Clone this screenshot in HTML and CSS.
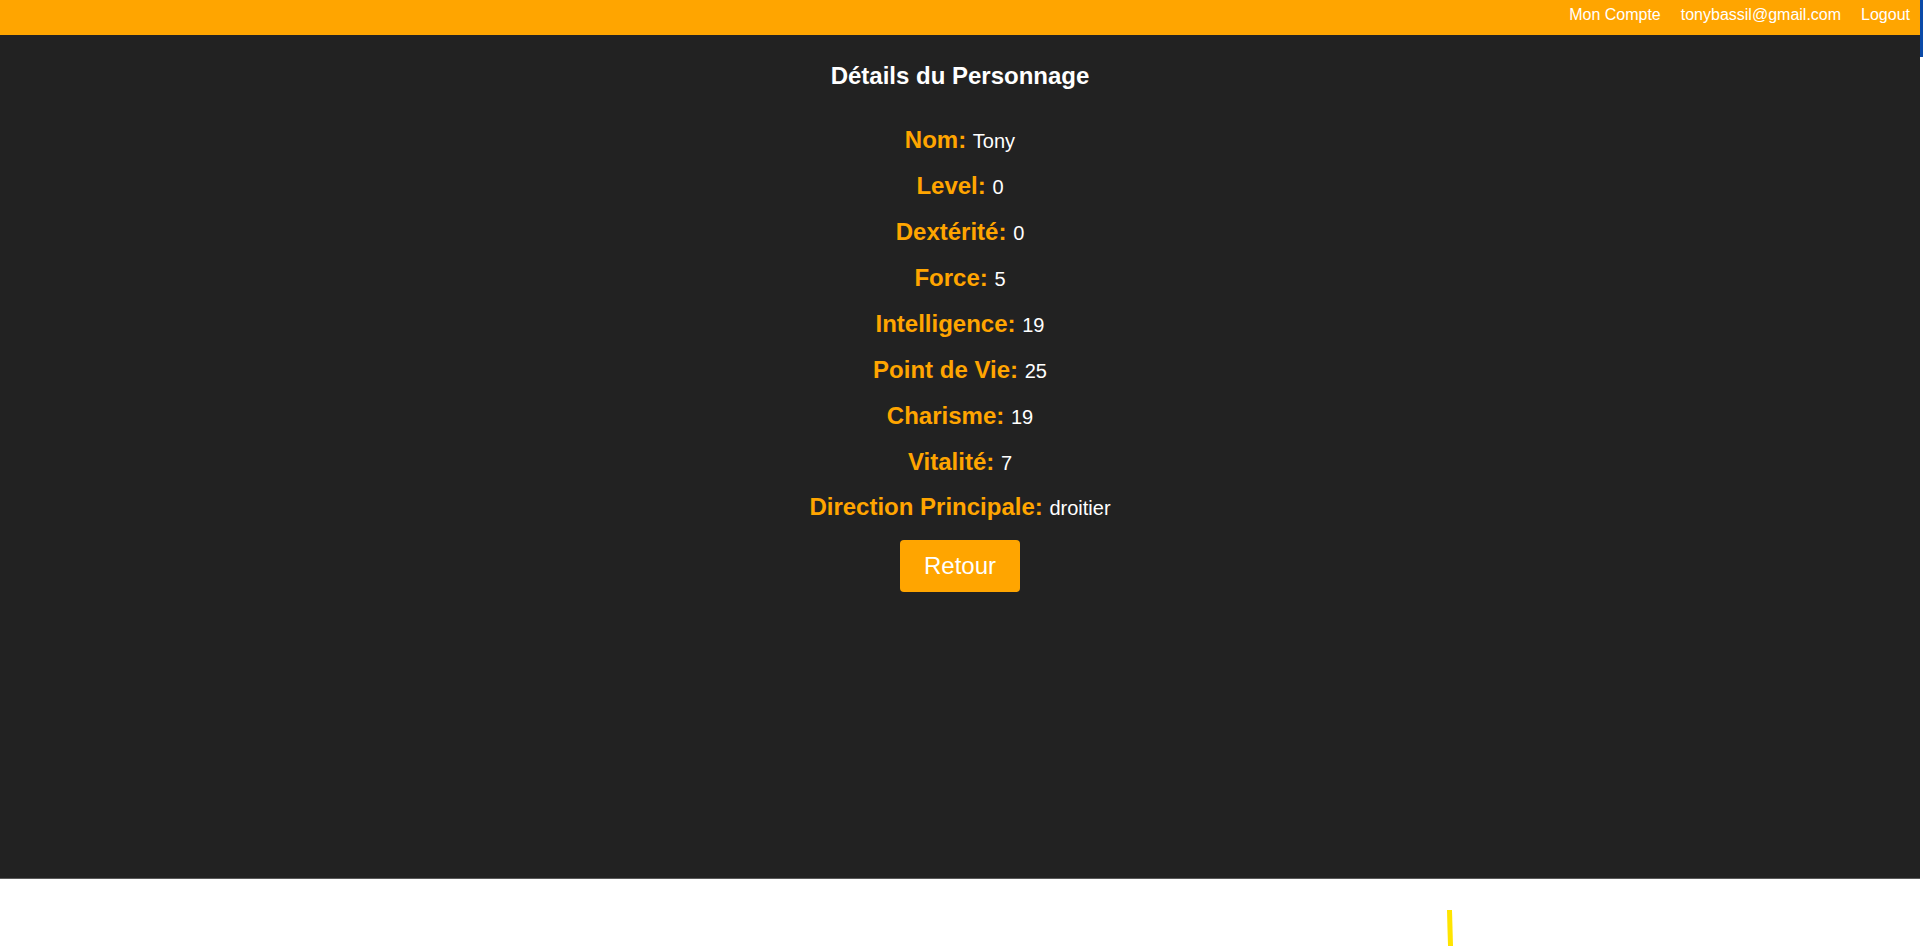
FILE: index.html
```html
<!DOCTYPE html>
<html lang="fr">
<head>
<meta charset="utf-8">
<title>Détails du Personnage</title>
<link rel="stylesheet" href="styles.css">
</head>
<body>
<div class="page">
  <header class="topbar">
    <nav class="topnav">
      <a class="navlink" href="#">Mon Compte</a>
      <a class="navlink" href="#">tonybassil@gmail.com</a>
      <a class="navlink" href="#">Logout</a>
    </nav>
  </header>
  <main class="content">
    <h2 class="title">Détails du Personnage</h2>
    <div class="details">
      <p class="row"><strong class="label">Nom:</strong> <span class="value">Tony</span></p>
      <p class="row"><strong class="label">Level:</strong> <span class="value">0</span></p>
      <p class="row"><strong class="label">Dextérité:</strong> <span class="value">0</span></p>
      <p class="row"><strong class="label">Force:</strong> <span class="value">5</span></p>
      <p class="row"><strong class="label">Intelligence:</strong> <span class="value">19</span></p>
      <p class="row"><strong class="label">Point de Vie:</strong> <span class="value">25</span></p>
      <p class="row"><strong class="label">Charisme:</strong> <span class="value">19</span></p>
      <p class="row"><strong class="label">Vitalité:</strong> <span class="value">7</span></p>
      <p class="row"><strong class="label">Direction Principale:</strong> <span class="value">droitier</span></p>
    </div>
    <button class="back-btn" type="button">Retour</button>
  </main>
  <div class="edge-strip"></div>
  <svg class="pen-mark" width="8" height="36" viewBox="0 0 8 36"><polygon points="1,0 6,0 7,36 2,36 1.5,20" fill="#ffe500"/></svg>
</div>
</body>
</html>
```

FILE: styles.css
```css
html, body {
  margin: 0;
  padding: 0;
  background: #ffffff;
}

body {
  font-family: "Liberation Sans", Arial, sans-serif;
  width: 1923px;
  height: 946px;
  overflow: hidden;
}

.page {
  position: relative;
  width: 1920px;
}

.topbar {
  height: 35px;
  background: #ffa500;
  display: flex;
  justify-content: flex-end;
  box-sizing: border-box;
  padding-top: 6px;
}

.topnav {
  display: flex;
}

.navlink {
  color: #ffffff;
  text-decoration: none;
  font-size: 16px;
  line-height: 18px;
  padding: 0 10px;
}

.content {
  background: #222222;
  border-bottom: 1px solid #5a5a5a;
  display: flex;
  flex-direction: column;
  align-items: center;
  padding-top: 26.7px;
  box-sizing: content-box;
  height: 816.3px;
}

.title {
  margin: 0;
  color: #ffffff;
  font-size: 24px;
  font-weight: bold;
  line-height: 28px;
}

.details {
  margin-top: 36.3px;
  display: flex;
  flex-direction: column;
  align-items: center;
  gap: 17.95px;
}

.row {
  margin: 0;
  font-size: 24px;
  line-height: 28px;
  white-space: nowrap;
}

.label {
  color: #ffa500;
  font-weight: bold;
}

.value {
  color: #ffffff;
  font-size: 20px;
  line-height: 1;
}

.back-btn {
  margin-top: 18.4px;
  background: #ffa500;
  color: #ffffff;
  border: none;
  border-radius: 4px;
  font-family: "Liberation Sans", Arial, sans-serif;
  font-size: 24px;
  line-height: 28px;
  padding: 12px 24px;
  cursor: pointer;
}

.edge-strip {
  position: absolute;
  top: 0;
  left: 1920px;
  width: 3px;
  height: 57px;
  background: #0b4aa8;
}

.pen-mark {
  position: absolute;
  left: 1446px;
  top: 910px;
}
```
